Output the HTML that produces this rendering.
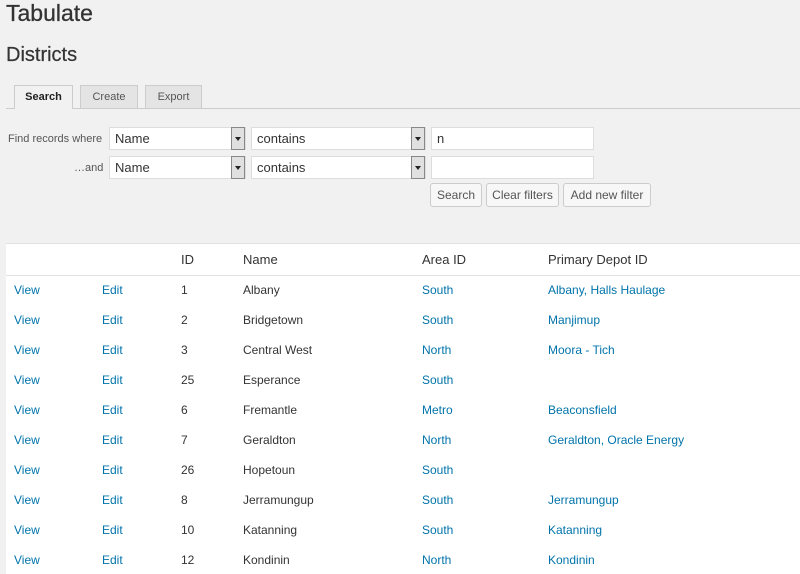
<!DOCTYPE html>
<html><head><style>
body{margin:0;width:800px;height:565px;overflow:hidden;background:#f1f1f1;font-family:"Liberation Sans",sans-serif;color:#444;position:relative}
.a{position:absolute;white-space:nowrap}
.tab{position:absolute;top:85px;height:23px;border:1px solid #ccc;border-bottom:none;background:#e4e4e4;font-size:11px;line-height:23px;text-align:center;color:#555;box-sizing:border-box}
.inp{position:absolute;height:23px;background:#fff;border:1px solid #ddd;box-sizing:border-box;font-size:13px;line-height:21px;padding-left:5px;color:#333}
.sb{position:absolute;width:14px;height:23px;background:#e0e0e0;border:1px solid #888;box-sizing:border-box}
.sb:after{content:"";position:absolute;left:3px;top:9px;border:3px solid transparent;border-top:4px solid #222}
.btn{position:absolute;top:183px;height:24px;background:#f7f7f7;border:1px solid #ccc;border-radius:3px;box-sizing:border-box;font-size:12px;line-height:22px;text-align:center;color:#555}
.tbl{position:absolute;left:6px;top:243px;width:794px;height:330px;background:#fff;border-top:1px solid #e1e1e1}
.r{position:absolute;left:0;width:794px;font-size:12px}
.r span{position:absolute}
.l{color:#0073aa}
</style></head><body>
<div class="a" style="left:6px;top:0px;font-size:23px;color:#333;-webkit-text-stroke:0.3px #333">Tabulate</div>
<div class="a" style="left:6px;top:44px;font-size:20px;color:#333;-webkit-text-stroke:0.2px #333">Districts</div>
<div class="a" style="left:6px;top:108px;width:794px;border-top:1px solid #ccc"></div>
<div class="tab" style="left:14px;width:59px;background:#f1f1f1;height:24px;color:#222;font-weight:bold">Search</div>
<div class="tab" style="left:80px;width:58px">Create</div>
<div class="tab" style="left:145px;width:57px">Export</div>
<div class="a" style="left:8px;top:133px;font-size:11px;color:#555">Find records where</div>
<div class="a" style="left:74px;top:162px;font-size:11px;color:#555">…and</div>
<div class="inp" style="left:109px;top:127px;width:137px">Name</div><div class="sb" style="left:231px;top:127px"></div>
<div class="inp" style="left:251px;top:127px;width:175px">contains</div><div class="sb" style="left:411px;top:127px"></div>
<div class="inp" style="left:431px;top:127px;width:163px">n</div>
<div class="inp" style="left:109px;top:156px;width:137px">Name</div><div class="sb" style="left:231px;top:156px"></div>
<div class="inp" style="left:251px;top:156px;width:175px">contains</div><div class="sb" style="left:411px;top:156px"></div>
<div class="inp" style="left:431px;top:156px;width:163px"></div>
<div class="btn" style="left:430px;width:52px">Search</div>
<div class="btn" style="left:486px;width:73px">Clear filters</div>
<div class="btn" style="left:563px;width:88px">Add new filter</div>
<div class="tbl">
<div class="r" style="top:0;height:31px;border-bottom:1px solid #e1e1e1;font-size:13px;color:#333"><span style="left:175px;top:8px">ID</span><span style="left:237px;top:8px">Name</span><span style="left:416px;top:8px">Area ID</span><span style="left:542px;top:8px">Primary Depot ID</span></div>
<div id="rows"></div>
</div>
<script>
var d=[["1","Albany","South","Albany, Halls Haulage"],["2","Bridgetown","South","Manjimup"],["3","Central West","North","Moora - Tich"],["25","Esperance","South",""],["6","Fremantle","Metro","Beaconsfield"],["7","Geraldton","North","Geraldton, Oracle Energy"],["26","Hopetoun","South",""],["8","Jerramungup","South","Jerramungup"],["10","Katanning","South","Katanning"],["12","Kondinin","North","Kondinin"]];
var h="";d.forEach(function(x,i){h+='<div class="r" style="top:'+(39+i*30)+'px"><span class="l" style="left:8px">View</span><span class="l" style="left:96px">Edit</span><span style="left:175px;color:#333">'+x[0]+'</span><span style="left:237px;color:#333">'+x[1]+'</span><span class="l" style="left:416px">'+x[2]+'</span><span class="l" style="left:542px">'+x[3]+'</span></div>'});
document.getElementById("rows").outerHTML=h;
</script>
</body></html>
